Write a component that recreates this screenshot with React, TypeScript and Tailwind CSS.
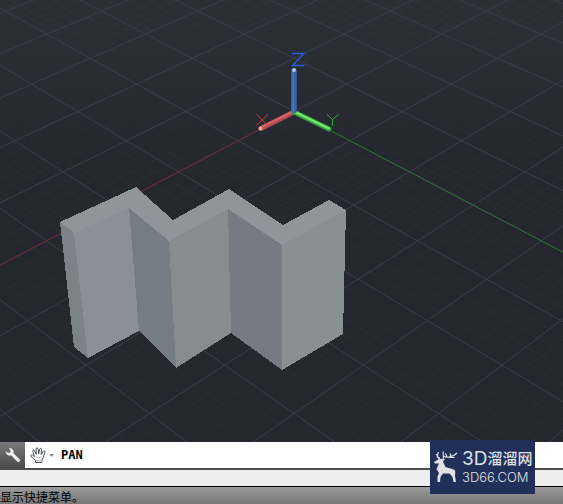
type Point = [number, number];

const MINOR_PER_MAJOR = 5;
const GRID_EXTENT = 14;

// Perspective projection of a ground plane point, origin at the UCS icon.
function project(i: number, j: number): Point {
  const depth = 1 / (0.0011117 - 0.00003493 * (i + j));
  return [294 + (j - i) * 0.06013 * depth, depth - 788];
}

function segment(from: Point, to: Point) {
  return `M${from[0].toFixed(1)} ${from[1].toFixed(1)}L${to[0].toFixed(1)} ${to[1].toFixed(1)}`;
}

function gridPath(major: boolean) {
  const parts: string[] = [];
  const count = GRID_EXTENT * MINOR_PER_MAJOR;
  for (let n = -count; n <= count; n++) {
    if ((n % MINOR_PER_MAJOR === 0) !== major) continue;
    const k = n / MINOR_PER_MAJOR;
    parts.push(segment(project(k, -GRID_EXTENT), project(k, GRID_EXTENT)));
    parts.push(segment(project(-GRID_EXTENT, k), project(GRID_EXTENT, k)));
  }
  return parts.join("");
}

const faces = [
  { points: "60,222 136,187 173,220 229,189 283,225 329,200 346,210 282,245 228,209 169,241 129,208 74,233", fill: "#8f959b" },
  { points: "60,222 74,233 88,358 74,347", fill: "#7b8389" },
  { points: "74,233 129,208 139,331 88,358", fill: "#899097" },
  { points: "129,208 169,241 176,368 139,331", fill: "#757d84" },
  { points: "169,241 228,209 231,333 176,368", fill: "#868d8e" },
  { points: "228,209 282,245 282,370 231,333", fill: "#747b82" },
  { points: "282,245 346,210 343,334 282,370", fill: "#899092" },
];

function Viewport() {
  return (
    <svg viewBox="0 0 563 442" className="block w-full" role="img" aria-label="3D model">
      <defs>
        <linearGradient id="ground" x1="0" y1="0" x2="0" y2="1">
          <stop offset="0" stopColor="#2c3037" />
          <stop offset="0.4" stopColor="#24272d" />
          <stop offset="1" stopColor="#24272d" />
        </linearGradient>
        <linearGradient id="zBar">
          <stop offset="0" stopColor="#345a96" />
          <stop offset="0.4" stopColor="#4a78b8" />
          <stop offset="1" stopColor="#2f5088" />
        </linearGradient>
      </defs>
      <rect width="563" height="442" fill="url(#ground)" />
      <path d={gridPath(false)} stroke="#2a2d33" strokeWidth="1" />
      <path d={gridPath(true)} stroke="#3a3e48" strokeWidth="1" />
      <path d={segment(project(0, 0), project(GRID_EXTENT, 0))} stroke="#742830" />
      <path d={segment(project(0, 0), project(0, GRID_EXTENT))} stroke="#2a7030" />
      <g shapeRendering="crispEdges">
        {faces.map((face) => (
          <polygon key={face.points} points={face.points} fill={face.fill} />
        ))}
      </g>
      <g strokeLinecap="round" fill="none">
        <path d="M294 112L261 128.500" stroke="#b04a4e" strokeWidth="5" />
        <path d="M293 111.500L261 127.500" stroke="#d06466" strokeWidth="2" />
        <path d="M294 112L329 129" stroke="#36a33a" strokeWidth="5" />
        <path d="M296 112.500L329 128.500" stroke="#7be878" strokeWidth="2" />
      </g>
      <rect x="291" y="69" width="6" height="44" rx="2" fill="url(#zBar)" />
      <circle cx="294" cy="70" r="2" fill="#a9cdf5" />
      <circle cx="260.500" cy="128.500" r="2" fill="#eba9a6" />
      <path d="M292 53.500H304L292.500 65.500H304.500" fill="none" stroke="#1f62e0" strokeWidth="1.300" />
      <path d="M256.500 114.500L268 125.500M268 114.500L256.500 125.500" stroke="#e2342f" />
      <path d="M327 114.500L332.500 119.500L338.500 114.500M332.500 119.500V126" fill="none" stroke="#35ab35" />
    </svg>
  );
}

function WrenchIcon() {
  return (
    <svg viewBox="0 0 16 16" className="size-4" aria-hidden="true">
      <path
        d="M4.300 1L7 2.100L8.300 4.300L8.100 6.200L14.300 11.900C15.100 12.700 15.100 13.700 14.500 14.300C13.900 15 12.800 15 12.100 14.200L6.200 8L4.200 8.400L1.900 7.300L.8 4.700L3.400 6.200L5.400 5.700L5.900 3.700Z"
        fill="#f4f4f4"
        stroke="#f4f4f4"
        strokeWidth="0.500"
        strokeLinejoin="round"
      />
      <circle cx="13.200" cy="13" r="0.600" fill="#777" />
    </svg>
  );
}

function HandIcon() {
  return (
    <svg viewBox="0 0 17 17" className="size-[17px]" aria-hidden="true">
      <path
        d="M5.500 15.500V13.500L1 9.500C0 8.300 1.400 7.200 2.600 8.200L4.500 9.800L2.800 4.300C2.500 2.900 4.200 2.500 4.700 3.800L6.300 7.300L6 2.100C6 .6 7.900 .6 8.100 2L8.700 6.900L9.700 2.200C10 .9 11.800 1.200 11.600 2.700L11.100 7.500L13.200 4.300C14 3.200 15.400 4 14.900 5.300L13.300 10.200L11.900 13V15.500Z"
        fill="#fff"
        stroke="#4b4f5c"
        strokeLinejoin="round"
      />
      <path d="M6 10L8 11M9 10.500L11.500 10M6 13.500H12" stroke="#b4b8c4" fill="none" />
    </svg>
  );
}

function DeerIcon() {
  return (
    <svg viewBox="0 0 26 34" className="h-[34px] w-[26px]" aria-hidden="true">
      <path
        d="M0 12L4 9.500L6 9L11 9L9 11.500L10 14L11.500 17C14 18.500 18 18 20.500 20C22 21.500 21 24 21 26L22 32H19.500L18.500 27L15.500 23.500L9 23.500L6.500 27L6 32H3.500V26.500L5 23L2.500 19L5 13.500L1 13.500Z"
        fill="#dfe1e6"
      />
      <path
        d="M6.500 9.500C3 8 3 5 4.500 2M4 6.500L2 4M6 8L2.500 7M8.500 9.500C11 8 8 5 9.500 1.500M9 6C13 8.500 19 7 23 3M13 7L11.500 3.500M17 6.500L16 3.500M15 7.500L20.500 7.500"
        fill="none"
        stroke="#dfe1e6"
        strokeWidth="1.200"
      />
    </svg>
  );
}

function Watermark() {
  return (
    <a
      href="#3d66"
      className="absolute right-7 bottom-[10px] flex h-[54px] w-[105px] items-center gap-[2px] bg-[#223059] pl-1 text-[#dfe1e6]"
    >
      <DeerIcon />
      <span className="flex flex-col font-['Inter','Noto_Sans_CJK_SC',sans-serif] whitespace-nowrap">
        <span className="flex items-center text-[15px] leading-[20px] font-medium">
          <span className="text-[19px] font-normal">3D</span>溜溜网
        </span>
        <span className="text-[13px] leading-[16px] font-light">3D66.COM</span>
      </span>
    </a>
  );
}

export default function App() {
  return (
    <main className="relative overflow-hidden bg-[#24272d] text-black">
      <Viewport />
      <form className="flex h-[26px] items-stretch bg-white" onSubmit={(e) => e.preventDefault()}>
        <button
          type="button"
          aria-label="Customize"
          className="flex w-[25px] items-center justify-end bg-linear-to-b from-[#7a7a7a] to-[#4b4b4b] pr-1"
        >
          <WrenchIcon />
        </button>
        <button type="button" aria-label="Recent commands" className="flex items-center gap-[2px] pl-[5px]">
          <HandIcon />
          <svg viewBox="0 0 5 3" className="h-[3px] w-[5px]" aria-hidden="true">
            <path d="M0 0H5L2.500 3Z" fill="#8a8a8a" />
          </svg>
        </button>
        <input
          aria-label="Command"
          defaultValue="PAN"
          className="min-w-0 flex-1 pl-[7px] font-['DejaVu_Sans_Mono',monospace] text-[12px] font-bold outline-none"
        />
      </form>
      <div className="h-[19px] border-t-2 border-b border-t-[#4c4c4c] border-b-black bg-[#eee]" />
      <footer className="bg-linear-to-b from-[#9b9b9b] to-[#777] pt-[5px] font-['Liberation_Sans','Noto_Sans_CJK_SC',sans-serif] text-[12px] leading-[12px] whitespace-nowrap">
        显示快捷菜单。
      </footer>
      <Watermark />
    </main>
  );
}
